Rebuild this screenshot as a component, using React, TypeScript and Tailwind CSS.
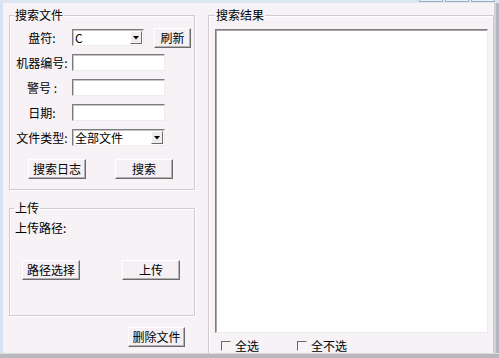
import React from "react";

const font = { fontFamily: '"Noto Sans CJK SC", "Noto Sans", sans-serif' };

function Btn({ label, className = "" }: { label: string; className?: string }) {
  return (
    <div
      className={`flex h-[20px] items-center justify-center border border-t-white border-l-white border-r-[#6a6a6a] border-b-[#6a6a6a] bg-[#f4f0f4] text-[12px] leading-none text-black shadow-[inset_-1px_-1px_0_#b4b0b4] ${className}`}
    >
      {label}
    </div>
  );
}

function TextBox({ className = "" }: { className?: string }) {
  return (
    <div
      className={`h-[17px] border border-t-[#7c7c7c] border-l-[#7c7c7c] border-r-[#ececec] border-b-[#ececec] bg-white shadow-[inset_1px_1px_0_#c4c4c4] ${className}`}
    />
  );
}

function Combo({ value, className = "" }: { value: string; className?: string }) {
  return (
    <div
      className={`flex h-[17px] items-center border border-t-[#7c7c7c] border-l-[#7c7c7c] border-r-[#ececec] border-b-[#ececec] bg-white pl-[2px] pr-[1px] shadow-[inset_1px_1px_0_#c4c4c4] ${className}`}
    >
      <span className="flex-1 text-[12px] leading-none text-black">{value}</span>
      <div className="flex h-[13px] w-[12px] items-center justify-center border border-t-white border-l-white border-r-[#6a6a6a] border-b-[#6a6a6a] bg-[#f0ecf0]">
        <svg width="6" height="4" viewBox="0 0 6 4">
          <path d="M0 0h6L3 3.5z" fill="#000" />
        </svg>
      </div>
    </div>
  );
}

function Label({ text }: { text: string }) {
  return <span className="w-[56px] text-center text-[12px] leading-none text-black">{text}</span>;
}

function Check({ label, className = "" }: { label: string; className?: string }) {
  return (
    <div className={`flex h-[12px] items-center gap-[4px] ${className}`}>
      <div className="h-[10px] w-[10px] border border-t-[#6a6a6a] border-l-[#6a6a6a] border-r-[#f8f8f8] border-b-[#f8f8f8] bg-[#f6f2f6]" />
      <span className="text-[12px] leading-[12px] text-black">{label}</span>
    </div>
  );
}

const groupCls =
  "border border-[#cfcbd0] shadow-[inset_1px_1px_0_#ffffff,1px_1px_0_#ffffff]";

export default function App() {
  return (
    <div className="flex h-[358px] w-[499px] flex-col overflow-hidden bg-[#f6f2f6]" style={font}>
      {/* window top edge with caption buttons */}
      <div className="flex h-[3px] shrink-0 justify-end gap-[2px] bg-[#dbe6f1] pr-[4px]">
        <div className="h-[2px] w-[24px] border border-t-0 border-[#9fb0c4] bg-[#e8eef5]" />
        <div className="h-[2px] w-[24px] border border-t-0 border-[#9fb0c4] bg-[#e8eef5]" />
        <div className="h-[2px] w-[24px] border border-t-0 border-[#9fb0c4] bg-[#e8eef5]" />
      </div>

      <div className="flex min-h-0 flex-1 overflow-hidden">
        <div className="w-[3px] shrink-0 bg-[#d4e2f1]" />

        {/* left column */}
        <div className="flex w-[197px] shrink-0 flex-col pl-[6px] pt-[5px]">
          <fieldset className={`${groupCls} flex w-[186px] flex-col pl-[4px] pb-[10px] pt-[3px]`}>
            <legend className="px-[1px] text-[12px] leading-[14px] text-black">搜索文件</legend>
            <div className="flex h-[25px] items-center">
              <Label text="盘符:" />
              <Combo value="C" className="ml-[2px] w-[72px]" />
              <Btn label="刷新" className="ml-[10px] w-[37px]" />
            </div>
            <div className="flex h-[25px] items-center">
              <Label text="机器编号:" />
              <TextBox className="ml-[2px] w-[93px]" />
            </div>
            <div className="flex h-[25px] items-center">
              <Label text="警号 :" />
              <TextBox className="ml-[2px] w-[93px]" />
            </div>
            <div className="flex h-[25px] items-center">
              <Label text="日期:" />
              <TextBox className="ml-[2px] w-[93px]" />
            </div>
            <div className="flex h-[25px] items-center">
              <Label text="文件类型:" />
              <Combo value="全部文件" className="ml-[2px] w-[93px]" />
            </div>
            <div className="mt-[9px] flex items-center pl-[14px]">
              <Btn label="搜索日志" className="w-[58px]" />
              <Btn label="搜索" className="ml-[29px] w-[58px]" />
            </div>
          </fieldset>

          <fieldset className={`${groupCls} mt-[11px] flex h-[115px] w-[186px] flex-col pl-[4px]`}>
            <legend className="px-[1px] text-[12px] leading-[14px] text-black">上传</legend>
            <span className="mt-[6px] pl-[1px] text-[12px] leading-[14px] text-black">上传路径:</span>
            <div className="mt-[25px] flex items-center pl-[8px]">
              <Btn label="路径选择" className="w-[58px]" />
              <Btn label="上传" className="ml-[42px] w-[58px]" />
            </div>
          </fieldset>

          <div className="mt-[11px] flex pl-[119px]">
            <Btn label="删除文件" className="w-[57px]" />
          </div>
        </div>

        {/* right column */}
        <div className="flex flex-1 flex-col pl-[8px] pt-[5px]">
          <fieldset className={`${groupCls} flex h-[352px] w-[286px] shrink-0 flex-col pl-[6px]`}>
            <legend className="px-[1px] text-[12px] leading-[14px] text-black">搜索结果</legend>
            <div className="mt-[7px] h-[304px] w-[273px] border border-t-[#7c7c7c] border-l-[#7c7c7c] border-r-[#ececec] border-b-[#ececec] bg-white shadow-[inset_1px_1px_0_#a8a8a8]" />
            <div className="mt-[7px] flex items-center pl-[6px]">
              <Check label="全选" />
              <Check label="全不选" className="ml-[38px]" />
            </div>
          </fieldset>
        </div>

        <div className="flex w-[6px] shrink-0">
          <div className="w-[2px] bg-[#d2d2d8]" />
          <div className="w-[4px] bg-[#b4b6c2]" />
        </div>
      </div>

      <div className="h-[5px] shrink-0 border-t border-[#dcdcdc] bg-[#b9b9bd]" />
    </div>
  );
}
